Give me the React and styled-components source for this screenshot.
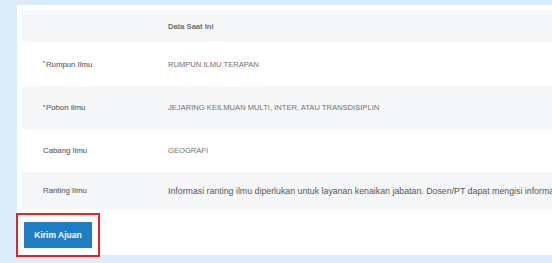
import React from 'react';
import styled, { createGlobalStyle } from 'styled-components';

const GlobalStyle = createGlobalStyle`
  html, body {
    margin: 0;
    padding: 0;
    background: #dcedf9;
    font-family: "Liberation Sans", Arial, sans-serif;
    overflow: hidden;
  }
`;

const Page = styled.div`
  width: 552px;
  height: 263px;
  padding: 5px 0 0 17px;
  box-sizing: border-box;
  overflow: hidden;
`;

const Card = styled.div`
  width: 720px;
  height: 250px;
  background: #fff;
  padding: 5px 0 0 5px;
  box-sizing: border-box;
`;

const Table = styled.div`
  display: grid;
  grid-template-columns: 146px 1fr;
  width: 715px;
`;

const Row = styled.div`
  display: contents;

  & > div {
    background: ${(p) => (p.$shade ? '#f6f7f9' : '#fff')};
    height: ${(p) => p.$h}px;
  }
`;

const Cell = styled.div`
  display: flex;
  align-items: center;
  white-space: nowrap;
  color: #707070;
  font-size: 7.6px;
  font-weight: ${(p) => (p.$head ? 700 : 400)};
`;

const Label = styled(Cell)`
  color: #6a6a6a;
  font-size: 7.8px;
  padding-left: 21px;
  -webkit-text-stroke: 0.15px #6a6a6a;
`;

const Mark = styled.sup`
  font-size: 5px;
  margin-right: 1px;
  position: relative;
  top: -1px;
`;

const Info = styled(Cell)`
  font-size: 8.8px;
  color: #555;
`;

const Highlight = styled.div`
  margin: 4px 0 0 -6px;
  width: 84px;
  height: 44px;
  border: 2px solid #e3252b;
  box-sizing: border-box;
  padding: 7px 0 0 6px;
`;

const Button = styled.button`
  width: 68px;
  height: 26px;
  border: none;
  background: #1f7dc3;
  color: #fff;
  font-family: "Liberation Sans", Arial, sans-serif;
  font-weight: 700;
  font-size: 8.5px;
  padding: 0;
  cursor: pointer;
`;

const rows = [
  { label: 'Rumpun Ilmu', req: true, value: 'RUMPUN ILMU TERAPAN', h: 44 },
  { label: 'Pohon Ilmu', req: true, value: 'JEJARING KEILMUAN MULTI, INTER, ATAU TRANSDISIPLIN', h: 43, shade: true },
  { label: 'Cabang Ilmu', value: 'GEOGRAFI', h: 43 },
];

export default function App() {
  return (
    <>
      <GlobalStyle />
      <Page>
        <Card>
          <Table>
            <Row $shade $h={32}>
              <Cell />
              <Cell $head>Data Saat Ini</Cell>
            </Row>
            {rows.map((r) => (
              <Row key={r.label} $shade={r.shade} $h={r.h}>
                <Label>
                  {r.req && <Mark>*</Mark>}
                  {r.label}
                </Label>
                <Cell>{r.value}</Cell>
              </Row>
            ))}
            <Row $shade $h={37}>
              <Label>Ranting Ilmu</Label>
              <Info>
                Informasi ranting ilmu diperlukan untuk layanan kenaikan jabatan. Dosen/PT dapat mengisi informasi ranting ilmu
              </Info>
            </Row>
          </Table>
          <Highlight>
            <Button>Kirim Ajuan</Button>
          </Highlight>
        </Card>
      </Page>
    </>
  );
}
